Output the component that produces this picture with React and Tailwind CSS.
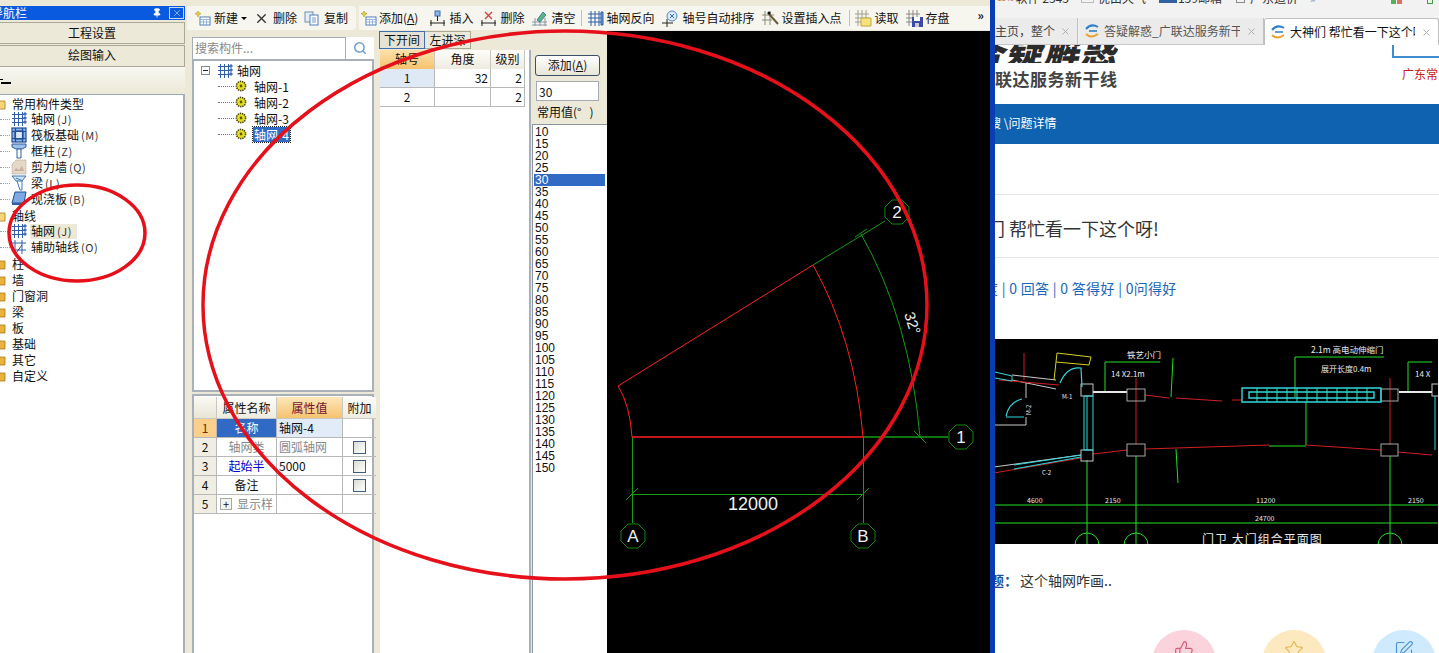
import { ThumbsUp, Star, SquarePen, Pin, X, Search } from 'lucide-react';

const cjk = "[font-family:'Noto_Sans_CJK_SC',sans-serif]";

// small drawn icons for the desktop app
function GridIcon({ className = '' }) {
  return (
    <svg width="16" height="16" viewBox="0 0 16 16" className={className} fill="none" stroke="#2f5fa8" strokeWidth="1">
      <path d="M1 3.5h14M1 7.5h14M1 11.5h14M3.5 1v14M7.5 1v14M11.5 1v14" />
      <path d="M13 2h2v2h-2zM13 6h2v2h-2zM13 10h2v2h-2z" fill="#7aa6e0" />
    </svg>
  );
}

function RaftIcon() {
  return (
    <svg width="16" height="16" viewBox="0 0 16 16" fill="none" stroke="#1f4f98" strokeWidth="1.2">
      <rect x="1" y="1" width="14" height="14" fill="#8fb4e6" />
      <rect x="4" y="4" width="8" height="8" fill="#dbe8fa" />
      <path d="M1 4.5h14M1 11.5h14M4.5 1v14M11.5 1v14" />
    </svg>
  );
}

function ColumnIcon() {
  return (
    <svg width="16" height="16" viewBox="0 0 16 16">
      <path d="M1 1h14v3l-4 2H5L1 4z" fill="#9cc0ea" stroke="#315f9e" />
      <path d="M6 6h4v9H6z" fill="#fff" stroke="#315f9e" />
    </svg>
  );
}

function WallIcon() {
  return (
    <svg width="16" height="16" viewBox="0 0 16 16">
      <path d="M1 5l4-4h10v14H1z" fill="#e6d8c6" stroke="#b0a090" strokeDasharray="1 1" />
      <path d="M3 12l2-3 3 2 3-4 2 5z" fill="#c9b09a" />
    </svg>
  );
}

function BeamIcon() {
  return (
    <svg width="16" height="16" viewBox="0 0 16 16" fill="none" stroke="#3f78b4">
      <path d="M1 1h14l-4 5H5z" fill="#cfe2f6" />
      <path d="M6 6l3 9h2V6M5 3l7 3" />
    </svg>
  );
}

function SlabIcon() {
  return (
    <svg width="16" height="16" viewBox="0 0 16 16">
      <path d="M4 1h11l-2 11H1z" fill="#7fa9e4" stroke="#1f4f98" />
      <path d="M1 12h12v2H1z" fill="#2f5fa8" />
    </svg>
  );
}

function AuxIcon() {
  return (
    <svg width="16" height="16" viewBox="0 0 16 16" fill="none" stroke="#2f5fa8">
      <path d="M1 4h14M1 11h14M4 1v14M11 1v14" />
      <path d="M5 14l6-8" stroke="#444" />
    </svg>
  );
}

function Folder({ open }) {
  return (
    <svg width="14" height="13" viewBox="0 0 14 13" className="ml-[-8px] mr-[6px] shrink-0">
      <path d="M1 2h5l1 2h6v8H1z" fill={open ? '#f7d67a' : '#e8b23c'} stroke="#a87a1c" strokeWidth="0.8" />
    </svg>
  );
}

function GearDot() {
  return (
    <svg width="12" height="12" viewBox="0 0 12 12" className="shrink-0">
      <circle cx="6" cy="6" r="4.6" fill="#e8e020" stroke="#4a4a10" strokeDasharray="1.4 0.8" strokeWidth="1.6" />
      <circle cx="6" cy="6" r="1.4" fill="#55551a" />
    </svg>
  );
}

function NewIcon() {
  return (
    <svg width="16" height="16" viewBox="0 0 16 16">
      <path d="M3 1l1 2 2 .5-2 1.3L3 7 2 4.8 0 3.500 2 3z" fill="#f2cf3a" stroke="#a08a20" strokeWidth="0.5" />
      <rect x="5" y="7" width="10" height="8" fill="#fff" stroke="#4f7fb8" />
      <path d="M5 9.500h10M8.500 9.500V15M11.500 9.500V15M5 12h10" stroke="#7fa6d4" strokeWidth="0.8" />
    </svg>
  );
}

function CopyIcon() {
  return (
    <svg width="16" height="15" viewBox="0 0 16 15">
      <rect x="1" y="1" width="8" height="10" fill="#e4eefa" stroke="#6f8fb4" />
      <rect x="6" y="4" width="8" height="10" fill="#fff" stroke="#4f7fb8" />
      <path d="M8 7h4M8 9h4M8 11h4" stroke="#4f7fb8" strokeWidth="0.8" />
    </svg>
  );
}

function InsertIcon({ del }) {
  return (
    <svg width="17" height="17" viewBox="0 0 17 17" fill="none">
      <path d="M1 13h15" stroke="#222" />
      <path d="M2 10v6M15 10v6" stroke="#222" />
      {del ? (
        <path d="M5 2l7 7M12 2l-7 7" stroke="#d84040" strokeWidth="1.4" />
      ) : (
        <g>
          <rect x="6" y="1" width="5" height="5" fill="#8fb4e6" stroke="#3f6fae" />
          <path d="M8.500 6v5" stroke="#222" />
        </g>
      )}
    </svg>
  );
}

function ClearIcon() {
  return (
    <svg width="17" height="17" viewBox="0 0 17 17" fill="none">
      <path d="M1 12h15M1 15h15M4 8v8M9 8v8M14 8v8" stroke="#8a96a4" />
      <path d="M6 10l6-8 3 3-6 7z" fill="#5cb878" stroke="#3b7fae" />
    </svg>
  );
}

function ReverseIcon() {
  return (
    <svg width="17" height="17" viewBox="0 0 17 17" fill="none" stroke="#2f5fa8">
      <path d="M1 4h13M1 8h13M1 12h13M4 1v15M8 1v15M12 1v15" />
      <path d="M14 2h2v13h-2z" fill="#6f9fe0" />
    </svg>
  );
}

function SortIcon() {
  return (
    <svg width="17" height="17" viewBox="0 0 17 17" fill="none">
      <path d="M0 13h11M5 9v8" stroke="#222" />
      <circle cx="10" cy="6" r="5" fill="#dbe9fa" stroke="#4f8ac8" />
      <path d="M8 4l4 4M12 4l-4 4" stroke="#2f6fb8" />
    </svg>
  );
}

function WandIcon() {
  return (
    <svg width="17" height="17" viewBox="0 0 17 17" fill="none">
      <path d="M0 5h12M0 10h10M3 1v14M8 1v14" stroke="#8a8a7a" />
      <path d="M7 4l9 10" stroke="#6a5a3a" strokeWidth="2" />
      <circle cx="7" cy="3" r="1.600" fill="#111" />
    </svg>
  );
}

function OpenGridIcon() {
  return (
    <svg width="17" height="17" viewBox="0 0 17 17" fill="none">
      <path d="M0 4h14M0 8h14M0 12h14M3 0v16M7 0v16M11 0v16" stroke="#a0a090" />
      <path d="M6 8h10v8H6z" fill="#f6e27a" stroke="#c8a83a" />
    </svg>
  );
}

function SaveGridIcon() {
  return (
    <svg width="17" height="17" viewBox="0 0 17 17" fill="none">
      <path d="M0 4h14M0 8h14M0 12h14M3 0v16M7 0v16M11 0v16" stroke="#8a8a8a" />
      <path d="M6 7h11v10H6z" fill="#3a4aa8" />
      <path d="M8 7h6v4H8z" fill="#fff" />
      <path d="M9 13h4v4H9z" fill="#c8c8d8" />
    </svg>
  );
}

function NavRow({ icon, label, hint, active }) {
  return (
    <div className="flex h-4 items-center pl-[11px] relative">
      <span className="absolute left-0 top-1/2 w-[10px] border-t border-dotted border-gray-400" />
      <span className="w-4 mr-[3px] shrink-0 flex">{icon}</span>
      <span className={`px-[1px] h-[15px] leading-[14px] ${active ? 'bg-[#ece9d8] pr-[5px]' : ''}`}>
        {label}
        <span className="text-[11px] tracking-[0.6px] ml-[2px] text-[#333]">{hint}</span>
      </span>
    </div>
  );
}

function FolderRow({ label, open }) {
  return (
    <div className="flex h-4 items-center pl-0">
      <Folder open={open} />
      <span className="leading-[15px]">{label}</span>
    </div>
  );
}

function NavPanel() {
  const tail = ['柱', '墙', '门窗洞', '梁', '板', '基础', '其它', '自定义'];
  return (
    <div className="w-[185px] shrink-0 flex flex-col bg-[#ece9d8] overflow-hidden">
      <div className="h-[14px] bg-[#0a5ae0] flex items-center text-white text-[12px]">
        <span className="flex-1 ml-[-9px] leading-[14px] whitespace-nowrap">导航栏</span>
        <Pin size={10} className="mr-[7px] fill-white rotate-0" />
        <span className="w-[15px] h-[12px] border border-[#c8d8f0] mr-[1px] flex items-center justify-center">
          <X size={10} strokeWidth={1.2} />
        </span>
      </div>
      <div className="mt-[2px] h-[22px] border-y border-[#aca899] border-r bg-[#ece9d8] text-center text-[12px] leading-[19px] text-[#111]">工程设置</div>
      <div className="mt-[1px] h-[22px] border-y border-[#aca899] border-r bg-[#ece9d8] text-center text-[12px] leading-[18px] text-[#111]">绘图输入</div>
      <div className="h-[27px] bg-gradient-to-b from-[#f8f7f1] to-[#ece9d8] flex items-center">
        <span className="flex flex-col gap-[2px] mt-[2px]">
          <span className="w-[3px] h-[1px] bg-black" />
          <span className="w-[10px] h-[2px] bg-black ml-[1px]" />
        </span>
      </div>
      <div className="flex-1 bg-white border-t border-[#9aa8b8] border-r-2 border-r-[#aab0b8] text-[12px] text-[#111] mr-0">
        <FolderRow label="常用构件类型" open />
        <NavRow icon={<GridIcon />} label="轴网" hint="(J)" />
        <NavRow icon={<RaftIcon />} label="筏板基础" hint="(M)" />
        <NavRow icon={<ColumnIcon />} label="框柱" hint="(Z)" />
        <NavRow icon={<WallIcon />} label="剪力墙" hint="(Q)" />
        <NavRow icon={<BeamIcon />} label="梁" hint="(L)" />
        <NavRow icon={<SlabIcon />} label="现浇板" hint="(B)" />
        <FolderRow label="轴线" open />
        <NavRow icon={<GridIcon />} label="轴网" hint="(J)" active />
        <NavRow icon={<AuxIcon />} label="辅助轴线" hint="(O)" />
        {tail.map((name) => (
          <FolderRow key={name} label={name} />
        ))}
      </div>
    </div>
  );
}

function ToolItem({ icon, label, gap = 'ml-[8px]', textGap = 'gap-[3px]' }) {
  return (
    <div className={`flex items-center whitespace-nowrap ${textGap} ${gap}`}>
      {icon}
      {label && <span>{label}</span>}
    </div>
  );
}

function Toolbar() {
  return (
    <div className="h-[25px] bg-[#ece9d8] flex text-[12px] text-[#111] shrink-0">
      <div className="w-[169px] h-[24px] bg-[#f6f5ee] rounded-r flex items-center ml-[2px] pl-[8px]">
        <ToolItem icon={<NewIcon />} label="新建" gap="" />
        <span className="ml-[3px] border-x-[3px] border-t-[3px] border-x-transparent border-t-black" />
        <ToolItem icon={<X size={15} strokeWidth={2.2} className="text-[#333]" />} label="删除" gap="ml-[7px]" textGap="gap-[4px]" />
        <ToolItem icon={<CopyIcon />} label="复制" gap="ml-[7px]" textGap="gap-[4px]" />
      </div>
      <div className="flex-1 h-[24px] ml-[3px] bg-[#f6f5ee] flex items-center pl-[2px]">
        <ToolItem icon={<NewIcon />} label={<>添加(<u>A</u>)</>} gap="" textGap="gap-[2px]" />
        <ToolItem icon={<InsertIcon />} label="插入" gap="ml-[11px]" />
        <ToolItem icon={<InsertIcon del />} label="删除" gap="ml-[7px]" />
        <ToolItem icon={<ClearIcon />} label="清空" gap="ml-[7px]" />
        <span className="ml-[6px] h-[16px] border-l border-[#c5c2b0]" />
        <ToolItem icon={<ReverseIcon />} label="轴网反向" gap="ml-[5px]" textGap="gap-[2px]" />
        <ToolItem icon={<SortIcon />} label="轴号自动排序" gap="ml-[8px]" />
        <ToolItem icon={<WandIcon />} label="设置插入点" gap="ml-[7px]" />
        <span className="ml-[7px] h-[16px] border-l border-[#c5c2b0]" />
        <ToolItem icon={<OpenGridIcon />} label="读取" gap="ml-[5px]" />
        <ToolItem icon={<SaveGridIcon />} label="存盘" gap="ml-[7px]" />
        <span className="ml-[28px] text-[12px] font-bold leading-3 mb-[6px]">»</span>
      </div>
    </div>
  );
}

function ComponentPanel() {
  const children = ['轴网-1', '轴网-2', '轴网-3', '轴网-4'];
  return (
    <div className="w-[191px] shrink-0 bg-[#ece9d8] pl-[7px] pr-[2px] pt-[6px] flex flex-col text-[12px] text-[#111]">
      <div className="h-[24px] flex bg-white border-b-2 border-[#aab0b8]">
        <div className="w-[154px] h-[22px] border border-[#a5acb5] pl-[2px] leading-[20px] text-[#888] border-b-0">搜索构件...</div>
        <div className="flex-1 flex items-center justify-center bg-white">
          <Search size={14} strokeWidth={2.6} className="text-[#6f9fd0]" />
        </div>
      </div>
      <div className="h-[331px] bg-white border-x-2 border-b-2 border-[#aab0b8] pt-[2px] relative">
        <div className="flex items-center h-[15px] pl-[7px]">
          <span className="w-[9px] h-[9px] border border-[#7f8a96] flex items-center justify-center mr-[7px]">
            <span className="w-[5px] h-[1px] bg-[#222]" />
          </span>
          <GridIcon />
          <span className="ml-[4px]">轴网</span>
        </div>
        {children.map((name, i) => (
          <div key={name} className="flex items-center h-4 pl-[41px] relative">
            <span className="absolute left-[24px] w-[16px] top-1/2 border-t border-dotted border-gray-500" />
            <GearDot />
            <span className={`ml-[6px] px-[1px] leading-[15px] ${i === 3 ? 'bg-[#316ac5] text-white outline-1 outline-dotted outline-[#222]' : ''}`}>{name}</span>
          </div>
        ))}
      </div>
      <PropsTable />
    </div>
  );
}

function PropsTable() {
  const rows = [
    { no: '1', name: '名称', value: '轴网-4', selected: true },
    { no: '2', name: '轴网类', value: '圆弧轴网', muted: true, check: true },
    { no: '3', name: '起始半', value: '5000', blue: true, check: true },
    { no: '4', name: '备注', value: '', check: true },
    { no: '5', name: '显示样', value: '', muted: true, plus: true },
  ];
  const cell = 'border-r border-b border-[#b8b8b8] h-[19px] leading-[18px]';
  return (
    <div className="mt-[2px] flex-1 bg-white border-x-2 border-t-2 border-[#aab0b8] pt-[1px]">
      <div className="grid grid-cols-[23px_60px_66px_33px] h-[22px] text-center leading-[21px]">
        <div className="bg-gradient-to-b from-[#faf9f3] to-[#e8e5d6] border-r border-b border-[#c8c8c0]" />
        <div className="bg-gradient-to-b from-[#fdfcf8] to-[#eeece0] border-r border-b border-[#c8c8c0]">属性名称</div>
        <div className="bg-gradient-to-b from-[#fde6b8] to-[#f5c36e] border-r border-b border-[#c8c8c0] text-[#7a1030]">属性值</div>
        <div className="bg-gradient-to-b from-[#fdfcf8] to-[#eeece0] border-b border-[#c8c8c0]">附加</div>
      </div>
      {rows.map((r) => (
        <div key={r.no} className="grid grid-cols-[23px_60px_66px_33px]">
          <div className={`${cell} text-center ${r.selected ? 'bg-[#fcd08a] text-[#6a3000]' : 'bg-[#f0eee2]'}`}>{r.no}</div>
          <div className={`${cell} ${r.plus ? 'pl-[3px] flex items-center' : 'text-center'} ${r.selected ? 'bg-[#316ac5] text-white' : ''} ${r.muted ? 'text-[#888]' : ''} ${r.blue ? 'text-[#0000c8]' : ''}`}>
            {r.plus && (
              <span className="w-[12px] h-[12px] border border-[#a8a8a8] bg-[#f4f4ee] mr-[5px] flex items-center justify-center text-[11px] leading-none text-[#111]">+</span>
            )}
            {r.name}
          </div>
          <div className={`${cell} pl-[2px] ${r.selected ? 'bg-[#e2ebf8]' : ''} ${r.muted ? 'text-[#888]' : ''}`}>{r.value}</div>
          <div className={`${cell} flex items-center justify-center border-r-0`}>
            {r.check && <span className="w-[13px] h-[13px] border border-[#3f5f80] bg-gradient-to-br from-[#dcdcd4] to-white" />}
          </div>
        </div>
      ))}
    </div>
  );
}

function AxisPanel() {
  const angles = [];
  for (let a = 10; a <= 150; a += 5) angles.push(a);
  const cell = 'border-r border-b border-[#b8b8b8] h-[19px] leading-[18px]';
  return (
    <div className="w-[231px] shrink-0 flex flex-col bg-[#ece9d8] text-[12px] text-[#111]">
      <div className="h-[19px] flex pl-[3px] pt-0">
        <span className="h-[18px] w-[46px] border border-[#3f6fae] bg-[#e4e2d6] text-center leading-[16px]">下开间</span>
        <span className="h-[18px] w-[46px] border border-[#aca899] border-l-0 text-center leading-[16px]">左进深</span>
      </div>
      <div className="flex-1 flex min-h-0">
        <div className="w-[155px] ml-[0px] bg-white border-l-[4px] border-[#ece9d8] border-r-2 border-r-[#aab0b8]">
          <div className="grid grid-cols-[55px_56px_34px] h-[19px] text-center leading-[18px]">
            <div className="bg-gradient-to-b from-[#fde0a8] to-[#f5c36e] border-r border-[#c8c8c0]">轴号</div>
            <div className="bg-gradient-to-b from-[#fdfcf8] to-[#eeece0] border-r border-[#c8c8c0]">角度</div>
            <div className="bg-gradient-to-b from-[#fdfcf8] to-[#eeece0] border-r border-[#c8c8c0]">级别</div>
          </div>
          <div className="grid grid-cols-[55px_56px_34px]">
            <div className={`${cell} text-center bg-[#dfe8f5]`}>1</div>
            <div className={`${cell} text-right pr-[2px]`}>32</div>
            <div className={`${cell} text-right pr-[2px]`}>2</div>
            <div className={`${cell} text-center`}>2</div>
            <div className={cell} />
            <div className={`${cell} text-right pr-[2px]`}>2</div>
          </div>
        </div>
        <div className="flex-1 flex flex-col pl-[1px] min-w-0">
          <div className="ml-[3px] mt-[5px] w-[65px] h-[21px] border border-[#3a5068] rounded-[3px] bg-gradient-to-b from-white to-[#e8e6d8] text-center leading-[18px]">添加(<u>A</u>)</div>
          <div className="ml-[4px] mt-[5px] w-[63px] h-[20px] border border-[#a5acb5] bg-white pl-[2px] leading-[19px]">30</div>
          <div className="ml-[5px] h-[23px] leading-[22px] whitespace-pre">常用值(°   )</div>
          <div className="flex-1 bg-white border-l border-t border-[#8a96a4] pt-[1px] pl-[1px] pr-[2px] [font-family:'Liberation_Sans',sans-serif]">
            {angles.map((a) => (
              <div key={a} className={`h-3 leading-3 pl-[1px] ${a === 30 ? 'bg-[#316ac5] text-white' : ''}`}>{a}</div>
            ))}
          </div>
        </div>
      </div>
    </div>
  );
}

function AxisBubble({ cx, cy, label }) {
  const r = 13;
  const pts = [];
  for (let i = 0; i < 8; i++) {
    const t = (Math.PI / 4) * i + Math.PI / 8;
    pts.push(`${cx + r * Math.cos(t)},${cy + r * Math.sin(t)}`);
  }
  return (
    <g>
      <polygon points={pts.join(' ')} fill="none" stroke="#0c8a0c" />
      <text x={cx} y={cy + 6} textAnchor="middle" fontSize="17" fill="#f0f0f0" fontFamily="Liberation Sans, sans-serif">{label}</text>
    </g>
  );
}

function GridCanvas() {
  const green = '#149c14';
  const red = '#ff2020';
  return (
    <div className="w-[383px] shrink-0 bg-black">
      <svg width="383" height="622" viewBox="607 31 383 622" className="block">
        <g fill="none" strokeWidth="1">
          <path d="M863 437H948" stroke={green} strokeWidth="1.5" />
          <path d="M632.500 437.500V523M863.500 437.500V523M632 494.500H863" stroke={green} />
          <path d="M813 265L885 221M861 234Q910 320 920 437" stroke={green} />
          <path d="M626 500l12-12M857 500l12-12M914 431l12 12M855 237l12-8" stroke={green} />
          <path d="M632 437H863" stroke={red} strokeWidth="1.6" />
          <path d="M618 386L813 265M618 386Q630 405 632 437M813 265Q855 340 863 437" stroke={red} />
        </g>
        <AxisBubble cx={633} cy={536} label="A" />
        <AxisBubble cx={863} cy={536} label="B" />
        <AxisBubble cx={961} cy={437} label="1" />
        <AxisBubble cx={897} cy={212} label="2" />
        <text x="753" y="510" textAnchor="middle" fontSize="18" fill="#f0f0f0" fontFamily="Liberation Sans, sans-serif">12000</text>
        <text x="0" y="0" transform="translate(904 314) rotate(72)" fontSize="15" fill="#f0f0f0" fontFamily="Liberation Sans, sans-serif">32°</text>
      </svg>
    </div>
  );
}

function PlanImage() {
  const g = '#22e022';
  const r = '#d02020';
  const c = '#30d8e0';
  const w = '#c8c8c8';
  return (
    <svg width="443" height="205" viewBox="996 339 443 205" className="block bg-black">
      <g fill="none" strokeWidth="1">
        <path d="M996 505H1439M996 523H1439" stroke={g} />
        <path d="M1088 460V544M1137 456V544M1391 456V544" stroke={g} />
        <path d="M1106 392V362H1161M1296 397V357H1385M1409 392V362H1433M1307 402V445" stroke={g} />
        <path d="M1174 358L1172 397M1177 449L1179 483M1270 446H1307" stroke={g} />
        <path d="M1146 395L1170 398M1177 398L1223 401M1233 400H1243M1094 454L1128 450M1146 449L1270 445M1307 445L1382 450M1399 452L1433 455" stroke={r} />
        <path d="M1137 378V444M1391 378V445M1025 353V380" stroke={r} />
        <path d="M1013 375L1057 380M1013 380L1057 389M1027 383V398M995 425H1027V417M995 467L1082 455" stroke={w} />
        <path d="M995 473L1082 458M1000 380L1060 385" stroke={r} />
        <path d="M1094 392H1128M1400 392H1433" stroke="#e8e8e8" strokeWidth="2" />
        <rect x="1128" y="389" width="18" height="12" stroke="#a8a8a8" />
        <rect x="1128" y="444" width="18" height="12" stroke="#a8a8a8" />
        <rect x="1382" y="389" width="17" height="12" stroke="#a8a8a8" />
        <rect x="1382" y="444" width="17" height="12" stroke="#a8a8a8" />
        <rect x="1082" y="384" width="12" height="12" stroke={w} />
        <rect x="1082" y="450" width="12" height="11" stroke={w} />
        <rect x="1433" y="384" width="12" height="12" stroke={w} />
        <path d="M1085 396h9v54h-9zM1088 396v54" stroke={c} />
        <path d="M1436 396v54" stroke={c} />
        <path d="M1243 388h139v14h-139zM1250 392h125v6h-125z" stroke={c} strokeWidth="1.4" />
        <path d="M1258 388v14M1268 388v14M1278 388v14M1288 388v14M1298 388v14M1308 388v14M1318 388v14M1328 388v14M1338 388v14M1348 388v14M1358 388v14M1368 388v14" stroke="#20e8b0" />
        <path d="M1058 353L1092 357L1090 365L1057 362ZM1057 362L1055 380" stroke="#d8d020" />
        <path d="M1061 383Q1068 366 1082 368L1083 387M1007 416Q1010 402 1023 399M1007 417H1025" stroke={c} strokeWidth="1.2" />
        <path d="M1015 465L1082 455M1015 469L1082 457" stroke={c} />
        <path d="M996 372L1013 376V381L996 378" stroke={c} />
        <circle cx="1088" cy="545" r="12" stroke={g} />
        <circle cx="1137" cy="545" r="12" stroke={g} />
        <circle cx="1391" cy="545" r="12" stroke={g} />
      </g>
      <g fill="#e8e8e8" fontFamily="'Noto Sans CJK SC', sans-serif">
        <text x="1128" y="358" fontSize="8.500">铁艺小门</text>
        <text x="1112" y="377" fontSize="8">14 X2.1m</text>
        <text x="1312" y="353" fontSize="8.500">2.1m 高电动伸缩门</text>
        <text x="1322" y="372" fontSize="8">展开长度0.4m</text>
        <text x="1416" y="377" fontSize="8">14 X</text>
        <text x="1028" y="503" fontSize="7">4600</text>
        <text x="1106" y="503" fontSize="7">2150</text>
        <text x="1257" y="503" fontSize="7">11200</text>
        <text x="1409" y="503" fontSize="7">2150</text>
        <text x="1256" y="521" fontSize="7">24700</text>
        <text x="1063" y="399" fontSize="6">M-1</text>
        <text x="0" y="0" fontSize="6" transform="translate(1032 407) rotate(-90) translate(-8 0)">M-2</text>
        <text x="1043" y="475" fontSize="6">C-2</text>
        <text x="1203" y="544" fontSize="12" letterSpacing="1">门卫 大门组合平面图</text>
      </g>
    </svg>
  );
}

function BrowserPane() {
  return (
    <div className="flex-1 min-w-0 bg-white flex flex-col overflow-hidden">
      <div className="h-[18px] bg-[#f2f2f2] overflow-hidden text-[12px] text-[#333] shrink-0">
        <div className="flex items-center mt-[-11px] h-[18px] whitespace-nowrap pl-[3px]">
          <span className="text-[7px] text-[#c06020] mr-[2px]">2345</span>
          <span>软件 2345</span>
          <span className="ml-[12px] w-[13px] h-[10px] border border-[#bbb] mr-[4px]" />
          <span>优由天气</span>
          <span className="ml-[13px] w-[18px] h-[10px] bg-[#3060a0] mr-[1px]" />
          <span>139邮箱</span>
          <span className="ml-[14px] w-[9px] h-[10px] border border-[#888] mr-[5px]" />
          <span>广东造价</span>
          <span className="ml-[12px] text-[#888]">»</span>
          <span className="ml-[75px] w-[5px] h-[12px] bg-[#58b058]" />
          <span className="w-[5px] h-[12px] bg-[#e07060] ml-[1px]" />
          <span className="ml-[25px] w-[6px] h-[12px] border border-[#40a040]" />
        </div>
      </div>
      <div className="h-[27px] bg-[#f2f2f2] flex text-[12px] shrink-0 border-b border-[#c8c8c8]">
        <div className="w-[83px] flex items-center overflow-hidden border-r border-[#c0c0c0] bg-[#ebebeb] text-[#444] whitespace-nowrap">
          <span className="flex-1 overflow-hidden">主页，整个</span>
          <X size={11} className="text-[#aaa] mr-[6px] ml-[2px] shrink-0" />
        </div>
        <BrowserTab title="答疑解惑_广联达服务新干线" className="w-[185px] ml-[1px] bg-[#ebebeb] text-[#555]" />
        <BrowserTab title="大神们 帮忙看一下这个呀!" className="flex-1 bg-white text-[#111] h-[27px] border-t border-l border-[#c0c0c0] rounded-t-[3px]" />
      </div>
      <div className="h-[59px] flex justify-between shrink-0 overflow-hidden">
        <div>
          <div className="h-[18px] overflow-hidden text-[36px] leading-[36px] font-black italic text-[#2b2b2b] whitespace-nowrap tracking-[1px]">
            <div className="mt-[-16px] ml-[-26px]">答疑解惑</div>
          </div>
          <div className="mt-[7px] text-[17px] leading-[18px] font-bold text-[#444] whitespace-nowrap tracking-[0.5px]">联达服务新干线</div>
        </div>
        <div className="w-[47px] whitespace-nowrap">
          <div className="h-[13px] border-l-2 border-b-2 border-[#3f8fd0]" />
          <div className="mt-[9px] ml-[10px] text-[12px] leading-[14px] text-[#c82020]">广东常</div>
        </div>
      </div>
      <div className="h-[40px] bg-[#0f62b0] text-white text-[12px] leading-[38px] shrink-0 whitespace-nowrap pl-0">
        <span className="ml-[-6px]">搜 \问题详情</span>
      </div>
      <div className="mt-[50px] border-t border-[#e6e6e6] h-[64px] border-b shrink-0 text-[18px] leading-[66px] text-[#333] whitespace-nowrap">
        <span className="ml-[-8px]">门 帮忙看一下这个呀!</span>
      </div>
      <div className="h-[81px] pt-[20px] text-[14px] leading-[20px] text-[#1a66b8] whitespace-nowrap shrink-0 tracking-[0.3px]">
        <span className="ml-[-11px]">度 | 0 回答 | 0 答得好 | 0问得好</span>
      </div>
      <div className="shrink-0">
        <PlanImage />
      </div>
      <div className="mt-[26px] text-[14px] leading-[20px] text-[#333] whitespace-nowrap shrink-0">
        <span className="ml-[-5px] font-bold text-[#1a4f98]">题：</span>
        <span className="ml-[2px]">这个轴网咋画..</span>
      </div>
      <div className="mt-[40px] flex pl-[157px] gap-[46px] shrink-0">
        <RoundAction className="bg-[#fbd3dc] text-[#d85a70]" icon={<ThumbsUp size={20} strokeWidth={1.4} />} />
        <RoundAction className="bg-[#fde9bf] text-[#e8b850]" icon={<Star size={20} strokeWidth={1.4} />} />
        <RoundAction className="bg-[#cfe9fd] text-[#4a94d8]" icon={<SquarePen size={20} strokeWidth={1.4} />} />
      </div>
    </div>
  );
}

function BrowserTab({ title, className = '' }) {
  return (
    <div className={`flex items-center pl-[5px] overflow-hidden whitespace-nowrap border-r border-[#c0c0c0] ${className}`}>
      <svg width="16" height="16" viewBox="0 0 16 16" fill="none" className="shrink-0 mr-[4px]">
        <path d="M2 6Q7 0 14 4" stroke="#2f7fc8" strokeWidth="2" />
        <path d="M2 11Q7 16 14 11" stroke="#e8a030" strokeWidth="2" />
        <path d="M5 8h8" stroke="#2f7fc8" strokeWidth="1.6" />
      </svg>
      <span className="flex-1 overflow-hidden">{title}</span>
      <X size={11} className="text-[#aaa] mx-[6px] shrink-0" />
    </div>
  );
}

function RoundAction({ icon, className = '' }) {
  return (
    <div className={`w-[64px] h-[64px] rounded-full flex justify-center pt-[10px] shrink-0 ${className}`}>{icon}</div>
  );
}

export default function App() {
  return (
    <div className={`relative w-[1439px] h-[653px] flex overflow-hidden bg-white ${cjk}`}>
      <div className="w-[990px] shrink-0 flex flex-col bg-[#ece9d8] overflow-hidden">
        <div className="h-[6px] shrink-0" />
        <div className="flex flex-1 min-h-0">
          <NavPanel />
          <div className="flex-1 flex flex-col min-w-0">
            <Toolbar />
            <div className="flex flex-1 min-h-0">
              <ComponentPanel />
              <AxisPanel />
              <GridCanvas />
            </div>
          </div>
        </div>
      </div>
      <div className="w-[5px] shrink-0 bg-[#0a3cb4]" />
      <BrowserPane />
      {/* hand-drawn annotations on top of the screenshot */}
      <svg width="1439" height="653" viewBox="0 0 1439 653" className="absolute left-0 top-0 pointer-events-none" fill="none">
        <ellipse cx="565" cy="305" rx="362" ry="274" stroke="#e6101a" strokeWidth="3.5" />
        <ellipse cx="77" cy="233" rx="68" ry="48" stroke="#e6101a" strokeWidth="3.5" />
      </svg>
    </div>
  );
}
